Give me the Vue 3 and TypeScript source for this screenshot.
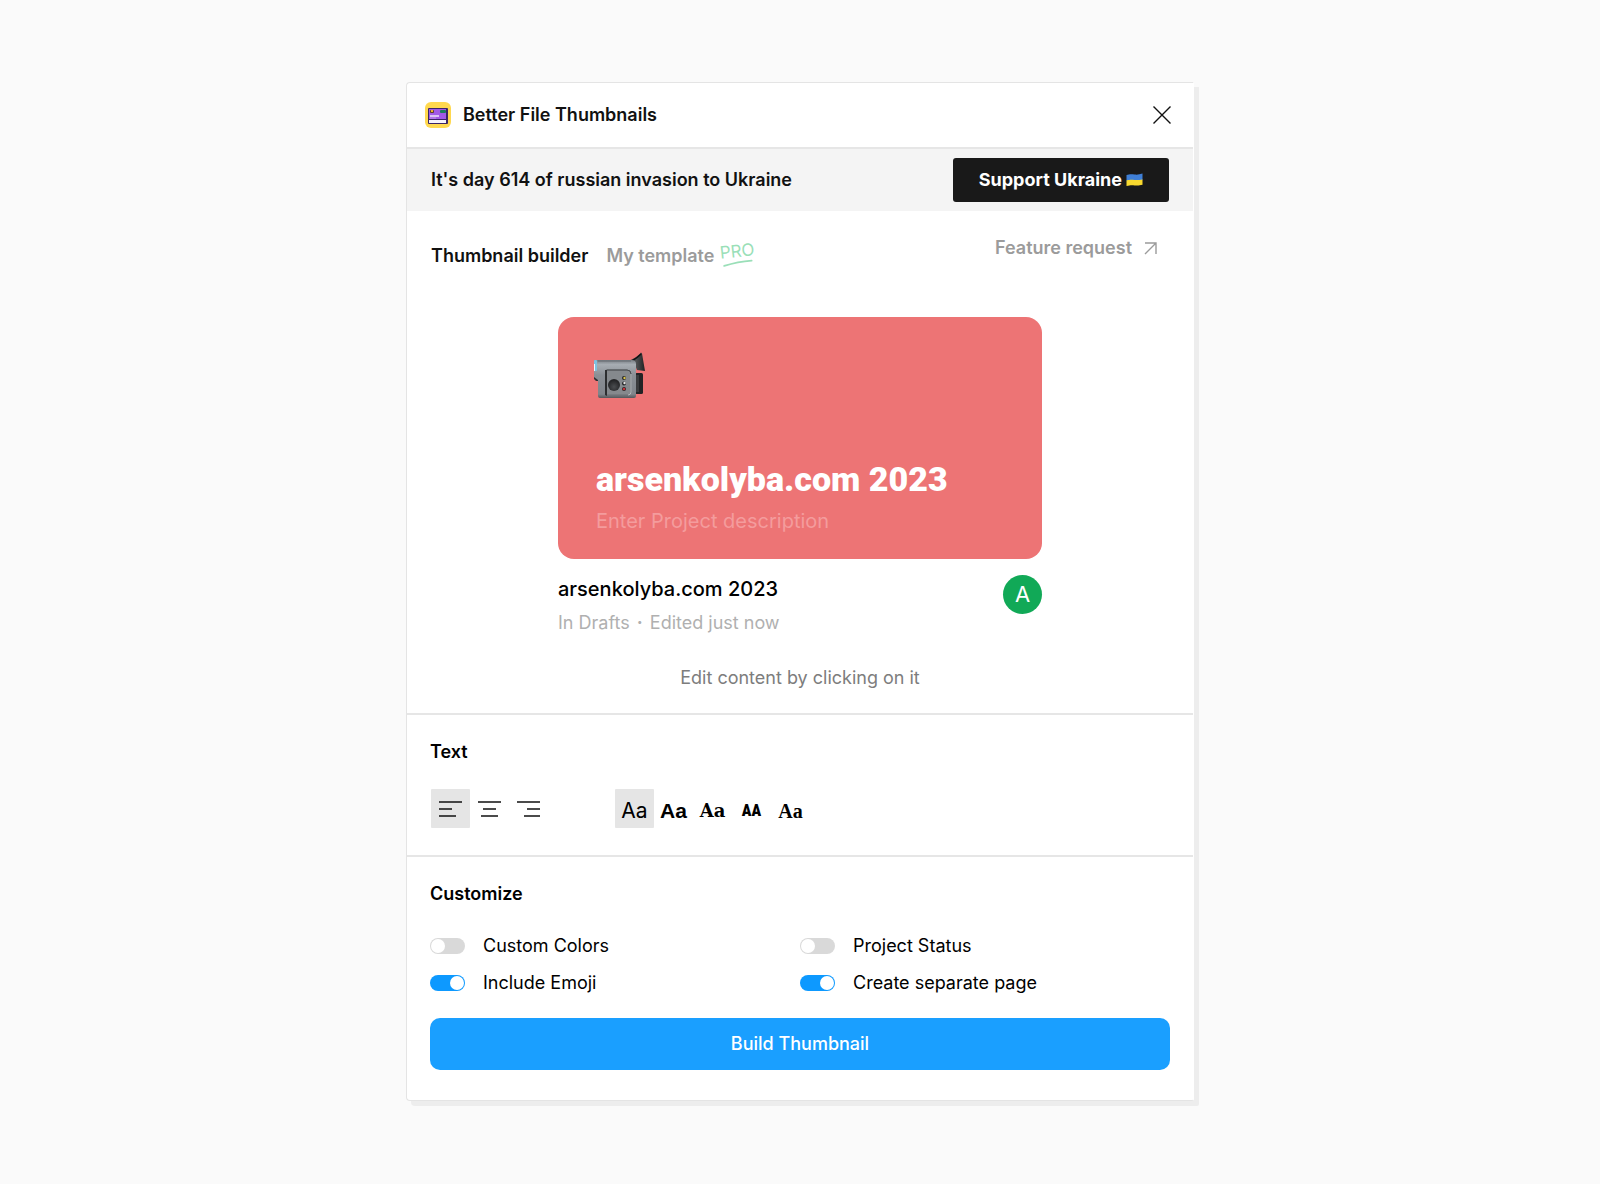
<script setup lang="ts">
import { ref } from 'vue'

type Align = 'left' | 'center' | 'right'

interface AlignOption {
  id: Align
  label: string
  path: string
}

interface FontOption {
  id: string
  label: string
  sample: string
}

interface Toggle {
  id: string
  label: string
  on: boolean
}

const alignments: AlignOption[] = [
  { id: 'left', label: 'Align left', path: 'M0 1h23M0 8h13M0 15h17' },
  { id: 'center', label: 'Align center', path: 'M0 1h23M5 8h13M3 15h17' },
  { id: 'right', label: 'Align right', path: 'M0 1h23M10 8h13M7 15h16' },
]

const fonts: FontOption[] = [
  { id: 'regular', label: 'Regular', sample: 'Aa' },
  { id: 'bold', label: 'Bold', sample: 'Aa' },
  { id: 'slab', label: 'Slab', sample: 'Aa' },
  { id: 'narrow', label: 'Narrow', sample: 'AA' },
  { id: 'serif', label: 'Serif', sample: 'Aa' },
]

const toggles = ref<Toggle[]>([
  { id: 'colors', label: 'Custom Colors', on: false },
  { id: 'status', label: 'Project Status', on: false },
  { id: 'emoji', label: 'Include Emoji', on: true },
  { id: 'page', label: 'Create separate page', on: true },
])

const align = ref<Align>('left')
const font = ref('regular')
const title = ref('arsenkolyba.com 2023')
const description = ref('')
</script>

<template>
  <main class="stage">
    <section class="panel">
      <header class="header">
        <svg class="logo" viewBox="0 0 26 26" aria-hidden="true">
          <rect width="26" height="26" rx="6" fill="#ffd84f" />
          <rect x="3" y="6" width="20" height="16" rx="1" fill="#3b2466" />
          <rect x="4" y="7" width="17" height="10" fill="#a159e6" />
          <rect x="4" y="18" width="17" height="3" fill="#f6f2fb" />
          <rect x="5" y="8" width="4" height="3" rx="1" fill="#5d3f2a" />
          <rect x="6" y="8" width="2" height="2" fill="#f0b22e" />
          <rect x="15" y="8" width="6" height="3" rx="1" fill="#1c7d5c" />
          <path d="M5 14h9" stroke="#dcc3f6" stroke-width="2" />
          <path d="M5 16h6" stroke="#c295ef" />
        </svg>
        <h1>Better File Thumbnails</h1>
        <button class="close" type="button" aria-label="Close">
          <svg width="18" height="18" viewBox="0 0 18 18" aria-hidden="true">
            <path d="M.5.5l17 17M17.500.5l-17 17" fill="none" stroke="#111" stroke-width="1.400" />
          </svg>
        </button>
      </header>

      <div class="banner">
        <p>It's day 614 of russian invasion to Ukraine</p>
        <button class="support" type="button">
          Support Ukraine
          <svg width="17" height="14" viewBox="0 0 17 14" aria-hidden="true">
            <path d="M.5 2C4 .8 6 1.200 8.500 1.500S13.500 1.600 16.500.6V7C13 8 11 7.800 8.500 7.500S4 7.200.5 8z" fill="#3f7fd6" />
            <path d="M.5 7.500C4 6.500 6 6.800 8.500 7S13 7.200 16.500 6.500v5.300C13 12.800 11 12.600 8.500 12.400S4 12.100.5 13z" fill="#f8d92f" />
          </svg>
        </button>
      </div>

      <nav class="tabs">
        <a class="tab current" href="#builder" aria-current="page">Thumbnail builder</a>
        <a class="tab" href="#template">My template</a>
        <span class="pro">
          <span class="pro-text">PRO</span>
          <svg width="32" height="6" viewBox="0 0 32 6" aria-hidden="true">
            <path d="M3 4.500C12 2.500 20 1.500 31 2" fill="none" stroke="#9adfb8" stroke-width="1.800" stroke-linecap="round" />
          </svg>
        </span>
        <a class="tab feature" href="#feature">
          Feature request
          <svg width="13" height="13" viewBox="0 0 13 13" aria-hidden="true">
            <path d="M1 1h11v11M12 1L1 12" fill="none" stroke="#9b9b9b" stroke-width="1.400" />
          </svg>
        </a>
      </nav>

      <div class="preview">
        <div class="card">
          <svg class="camera" width="52" height="48" viewBox="0 0 52 48" aria-hidden="true">
            <defs>
              <linearGradient id="shell" x1="0" y1="0" x2="0" y2="1">
                <stop offset="0" stop-color="#777d83" />
                <stop offset=".12" stop-color="#a7adb3" />
                <stop offset=".4" stop-color="#8a8f95" />
                <stop offset=".9" stop-color="#80858b" />
                <stop offset="1" stop-color="#54575b" />
              </linearGradient>
              <linearGradient id="cup" x1="0" y1="0" x2="1" y2="0">
                <stop offset="0" stop-color="#1e1f20" />
                <stop offset=".6" stop-color="#505254" />
                <stop offset="1" stop-color="#202122" />
              </linearGradient>
              <radialGradient id="knob" cx=".5" cy=".65" r=".55">
                <stop offset="0" stop-color="#4b4d50" />
                <stop offset="1" stop-color="#242527" />
              </radialGradient>
            </defs>
            <path d="M30 10C38 9 44 5 48 .5l1 1L52 19l-8-1-2-5-4-2z" fill="url(#cup)" />
            <path d="M32 11c7-1 12-5 16-9" fill="none" stroke="#111" stroke-width="1.500" />
            <rect x="42" y="21" width="8" height="21" rx="1.500" fill="#222325" />
            <rect x="43" y="23" width="3" height="17" fill="#3a3b3d" />
            <path d="M1 17h4v12H3L1 27z" fill="#303235" />
            <path d="M3 8h36q4 0 4 4v32q0 2-2 2H7q-2 0-2-2V28L1 25V10q0-2 2-2z" fill="url(#shell)" />
            <rect x="1" y="8" width="3" height="11" rx="1" fill="#7fc0df" />
            <rect x="1" y="12" width="1" height="7" fill="#eef7fa" />
            <path d="M5 9h33" stroke="#686d72" />
            <path d="M13 18h21q4 0 4 4v18q0 3-3 3H13z" fill="#85898d" stroke="#6a6e72" />
            <path d="M12 18h2v26l-2-1z" fill="#2c2e30" />
            <path d="M14 18h20q4 0 4 4" fill="none" stroke="#4a4d50" />
            <path d="M38 22v18q0 3-3 3" fill="none" stroke="#b4b8bb" />
            <circle cx="21" cy="33" r="6" fill="url(#knob)" />
            <g fill="#252628">
              <circle cx="31" cy="26" r="2" />
              <circle cx="31" cy="31.500" r="2" />
              <circle cx="31" cy="37" r="2" />
            </g>
            <circle cx="31.500" cy="26" r="1.200" fill="#ddc64b" />
            <circle cx="31.500" cy="31" r="1.200" fill="#e4e4e4" />
            <circle cx="31" cy="37" r="1.300" fill="#c62f36" />
          </svg>
          <input v-model="title" class="card-title" type="text" aria-label="Project title" />
          <input v-model="description" class="card-description" type="text" placeholder="Enter Project description" aria-label="Project description" />
        </div>
        <div class="file">
          <div>
            <h2>{{ title }}</h2>
            <p>In Drafts <span class="dot">·</span> Edited just now</p>
          </div>
          <span class="avatar">A</span>
        </div>
        <p class="hint">Edit content by clicking on it</p>
      </div>

      <section class="group">
        <h3>Text</h3>
        <div class="tools">
          <div class="toolset" role="group" aria-label="Alignment">
            <button
              v-for="option in alignments"
              :key="option.id"
              class="tool"
              :class="{ active: align === option.id }"
              type="button"
              :aria-label="option.label"
              :aria-pressed="align === option.id"
              @click="align = option.id"
            >
              <svg width="23" height="16" viewBox="0 0 23 16" aria-hidden="true">
                <path :d="option.path" fill="none" stroke="#111" stroke-width="1.600" />
              </svg>
            </button>
          </div>
          <div class="toolset samples" role="group" aria-label="Font">
            <button
              v-for="option in fonts"
              :key="option.id"
              class="tool"
              :class="[option.id, { active: font === option.id }]"
              type="button"
              :aria-label="option.label"
              :aria-pressed="font === option.id"
              @click="font = option.id"
            >
              {{ option.sample }}
            </button>
          </div>
        </div>
      </section>

      <section class="group">
        <h3>Customize</h3>
        <div class="toggles">
          <label v-for="toggle in toggles" :key="toggle.id" class="toggle">
            <input v-model="toggle.on" type="checkbox" />
            {{ toggle.label }}
          </label>
        </div>
        <button class="build" type="button">Build Thumbnail</button>
      </section>
    </section>
  </main>
</template>

<style>
body {
  background: #fafafa;
}
</style>

<style scoped>
.stage {
  padding: 82px 24px 79px;
  font-family: Inter, "Liberation Sans", sans-serif;
  font-size: 18px;
  line-height: 24px;
  color: #000;
}

.stage * {
  box-sizing: border-box;
}

h1,
h2,
h3,
p {
  margin: 0;
  font-size: 18px;
}

h1,
h3 {
  font-weight: 600;
}

button {
  display: flex;
  align-items: center;
  justify-content: center;
  padding: 0;
  border: 0;
  background: none;
  font: inherit;
  color: inherit;
  cursor: pointer;
}

.panel {
  max-width: 788px;
  margin: 0 auto;
  padding-bottom: 3px;
  border: 1px solid #e4e4e4;
  border-right-color: #fff;
  border-radius: 4px 0 2px 4px;
  background: #fff;
  box-shadow: 5px 5px 0 #ededed;
}

.header {
  display: flex;
  align-items: center;
  gap: 12px;
  height: 66px;
  padding: 0 21px 0 18px;
  border-bottom: 2px solid #e6e6e6;
}

.header h1 {
  flex: 1;
  color: #111;
}

.logo {
  width: 26px;
  height: 26px;
}

.close {
  width: 20px;
  height: 20px;
}

.banner {
  display: flex;
  align-items: center;
  justify-content: space-between;
  gap: 16px;
  min-height: 62px;
  padding: 9px 24px;
  background: #f4f4f4;
  color: #111;
}

.banner p {
  font-weight: 600;
}

.support {
  gap: 4px;
  height: 44px;
  padding: 0 26px;
  border-radius: 3px;
  background: #191919;
  color: #fff;
  font-weight: 700;
}

.tabs {
  display: flex;
  align-items: center;
  padding: 25px 36px 0 24px;
  height: 64px;
}

.tab {
  margin-right: 18px;
  color: #9b9b9b;
  font-weight: 600;
  text-decoration: none;
}

.tab.current {
  color: #111;
}

.pro {
  display: flex;
  flex-direction: column;
  margin: 0 0 4px -12px;
  color: #9adfb8;
  font-size: 17px;
  transform: rotate(-6deg);
}

.pro-text {
  line-height: 18px;
}

.tab.feature {
  display: flex;
  align-items: center;
  align-self: flex-start;
  gap: 12px;
  margin: 0 0 0 auto;
}

.preview {
  display: flex;
  flex-direction: column;
  max-width: 484px;
  margin: 0 auto;
  padding: 42px 0 23px;
}

.card {
  display: flex;
  flex-direction: column;
  align-items: flex-start;
  min-height: 242px;
  padding: 35px 35px 22px;
  border-radius: 16px;
  background: #ed7475;
}

.card input {
  width: 100%;
  padding: 0 3px;
  border: 0;
  outline: 0;
  background: none;
  color: #fff;
}

.card .card-title {
  height: 40px;
  margin-top: 59px;
  font: 900 34px/40px Roboto, "Liberation Sans", sans-serif;
}

.card .card-description {
  height: 28px;
  margin-top: 8px;
  font: 400 20px/28px Inter, "Liberation Sans", sans-serif;
}

.card-description::placeholder {
  color: #f49c9d;
  opacity: 1;
}

.file {
  display: flex;
  justify-content: space-between;
  padding-top: 16px;
}

.file h2 {
  font-size: 20px;
  line-height: 28px;
  font-weight: 500;
}

.file p {
  margin-top: 8px;
  color: #b0b0b0;
}

.dot {
  margin: 0 2px;
  font-weight: 700;
}

.avatar {
  width: 39px;
  height: 39px;
  border-radius: 50%;
  background: #11a957;
  color: #fff;
  font-size: 22px;
  line-height: 39px;
  text-align: center;
}

.hint {
  margin-top: 31px;
  color: #7d7d7d;
  text-align: center;
}

.group {
  border-top: 2px solid #e6e6e6;
  padding: 25px 23px 27px;
}

.tools {
  display: flex;
  gap: 67px;
  margin-top: 25px;
  padding-left: 1px;
}

.toolset {
  display: flex;
}

.tool {
  width: 39px;
  height: 39px;
  border-radius: 1px;
}

.tool.active {
  background: #e5e5e5;
}

.samples .tool {
  padding-top: 4px;
  font-size: 21px;
}

.samples .bold {
  font-family: "Liberation Sans", sans-serif;
  font-weight: 700;
}

.samples .slab {
  font-family: "DejaVu Serif", serif;
  font-weight: 700;
  font-size: 18px;
}

.samples .narrow {
  font-family: "Roboto Condensed", Roboto, sans-serif;
  font-weight: 900;
  font-size: 16px;
}

.samples .serif {
  font-family: "Liberation Serif", serif;
  font-weight: 700;
  font-size: 20px;
}

.toggles {
  display: grid;
  grid-template-columns: 1fr 1fr;
  row-gap: 13px;
  margin-top: 28px;
}

.toggle {
  display: flex;
  align-items: center;
  gap: 18px;
  cursor: pointer;
}

.toggle input {
  appearance: none;
  display: flex;
  width: 35px;
  height: 16px;
  margin: 0;
  padding: 1px;
  border-radius: 8px;
  background: #d9d9d9;
}

.toggle input::before {
  content: "";
  width: 14px;
  height: 14px;
  border-radius: 50%;
  background: #fff;
}

.toggle input:checked {
  justify-content: flex-end;
  background: #0d99ff;
}

.build {
  width: 100%;
  height: 52px;
  margin-top: 23px;
  border-radius: 10px;
  background: #1a9fff;
  color: #fff;
  font-weight: 500;
}
</style>
